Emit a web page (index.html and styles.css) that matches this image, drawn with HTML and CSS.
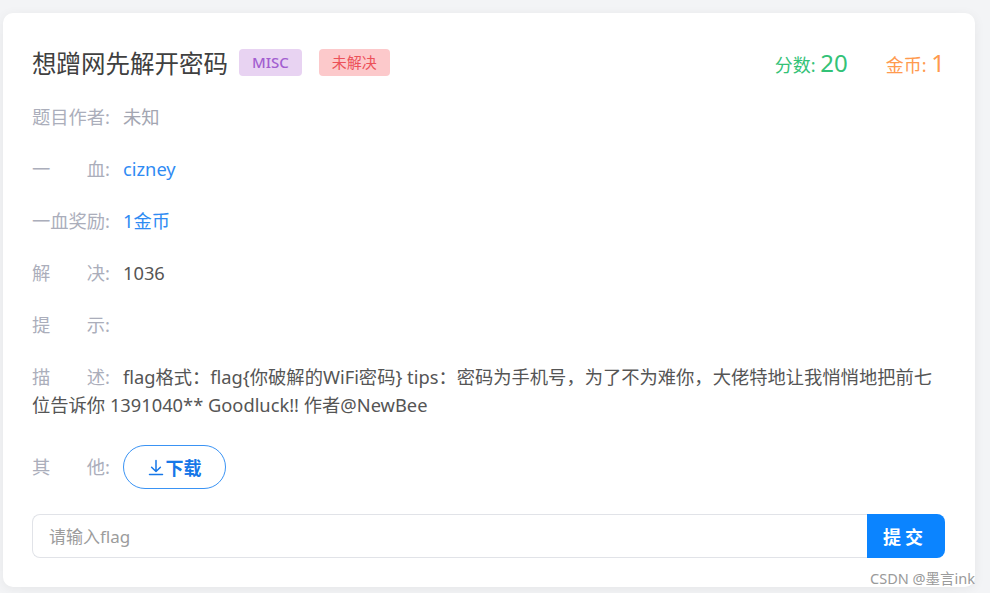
FILE: index.html
```html
<!DOCTYPE html>
<html lang="zh-CN">
<head>
    <meta charset="UTF-8">
    <meta name="viewport" content="width=device-width, initial-scale=1.0">
    <title>想蹭网先解开密码</title>
    <link rel="stylesheet" href="styles.css">
</head>
<body>
    <!-- Challenge card -->
    <div class="card">
        <div class="card-head">
            <div class="title-wrap">
                <h1 class="title">想蹭网先解开密码</h1>
                <span class="tag tag-misc">MISC</span>
                <span class="tag tag-todo">未解决</span>
            </div>
            <div class="stats">
                <span class="stat stat-score">分数: <b>20</b></span>
                <span class="stat stat-coin">金币: <b>1</b></span>
            </div>
        </div>

        <div class="info">
            <div class="row"><span class="label">题目作者:</span><span class="muted">未知</span></div>
            <div class="row"><span class="label">一　　血:</span><span class="link">cizney</span></div>
            <div class="row"><span class="label">一血奖励:</span><span class="link">1金币</span></div>
            <div class="row"><span class="label">解　　决:</span>1036</div>
            <div class="row"><span class="label">提　　示:</span></div>
            <div class="row"><span class="label">描　　述:</span>flag格式：flag{你破解的WiFi密码} tips：密码为手机号，为了不为难你，大佬特地让我悄悄地把前七位告诉你 1391040** Goodluck!! 作者@NewBee</div>
            <div class="row row-other">
                <span class="label">其　　他:</span>
                <button type="button" class="btn-download">
                    <svg width="16" height="17" viewBox="0 0 16 17" fill="none" stroke="currentColor" stroke-width="1.5" stroke-linecap="round" stroke-linejoin="round">
                        <path d="M8 1.5v11M3.6 8.2 8 12.5l4.4-4.3"/>
                        <path d="M1.5 15.5h13"/>
                    </svg>下载
                </button>
            </div>
        </div>

        <form class="flag-form">
            <input type="text" class="flag-input" placeholder="请输入flag">
            <button type="button" class="btn-submit">提交</button>
        </form>
    </div>

    <div class="watermark">CSDN @墨言ink</div>
</body>
</html>
```

FILE: styles.css
```css
body {
    margin: 0;
    padding: 13px 15px 6px 3px;
    font-family: 'Noto Sans', 'Noto Sans CJK SC', sans-serif;
    background-color: #f3f4f6;
    position: relative;
    overflow: hidden;
}

/* Card */
.card {
    background: white;
    border-radius: 10px;
    padding: 32px 30px 29px 29px;
    box-shadow: 0 2px 12px rgba(0, 0, 0, 0.06);
}

.card-head {
    display: flex;
    align-items: center;
    justify-content: space-between;
    height: 34px;
}

.title-wrap {
    display: flex;
    align-items: center;
}

.title {
    margin: 0 11px 0 0;
    font-size: 24.5px;
    font-weight: normal;
    color: #404040;
}

.tag {
    display: inline-block;
    height: 27px;
    line-height: 27px;
    padding: 0 13px;
    border-radius: 4px;
    font-size: 15px;
    margin-right: 17px;
}

.tag-misc {
    background-color: #e8d3f2;
    color: #a25ed0;
    font-weight: 500;
}

.tag-todo {
    background-color: #fcc9cb;
    color: #ec5159;
}

.stats {
    display: flex;
    align-items: baseline;
    gap: 38px;
}

.stat {
    font-size: 18px;
}

.stat b {
    font-weight: normal;
    font-size: 24px;
}

.stat-score {
    color: #33c277;
}

.stat-coin {
    color: #ff9a4e;
}

/* Info rows */
.info {
    display: flex;
    flex-direction: column;
    gap: 24px;
    margin-top: 24px;
}

.row {
    font-size: 18.3px;
    line-height: 28px;
    color: #555;
}

.label {
    display: inline-block;
    width: 82px;
    margin-right: 9px;
    color: #abaebb;
    white-space: nowrap;
}

.muted {
    color: #a3a6b2;
}

.link {
    color: #2f8bf3;
}

.row-other {
    display: flex;
    align-items: center;
    line-height: 44px;
    margin-top: 2px;
}

.btn-download {
    display: inline-flex;
    align-items: center;
    justify-content: center;
    gap: 2px;
    width: 103px;
    height: 44px;
    border: 1px solid #3a93f4;
    border-radius: 22px;
    background: white;
    color: #1677e8;
    font-family: inherit;
    font-size: 18px;
    font-weight: bold;
    cursor: pointer;
}

/* Flag form */
.flag-form {
    display: flex;
    margin-top: 25px;
}

.flag-input {
    flex: 1;
    height: 44px;
    box-sizing: border-box;
    padding: 0 16px;
    border: 1px solid #e1e3e8;
    border-right: none;
    border-radius: 8px 0 0 8px;
    font-family: inherit;
    font-size: 17px;
    outline: none;
}

.flag-input::placeholder {
    color: #9c9c9c;
}

.btn-submit {
    width: 78px;
    height: 44px;
    border: none;
    border-radius: 0 8px 8px 0;
    background-color: #0b84ff;
    color: white;
    font-family: inherit;
    font-size: 18px;
    font-weight: bold;
    letter-spacing: 4px;
    padding-left: 4px;
    cursor: pointer;
}

.watermark {
    position: absolute;
    right: 15px;
    top: 567px;
    font-size: 14.5px;
    color: #9a9a9a;
}
```
